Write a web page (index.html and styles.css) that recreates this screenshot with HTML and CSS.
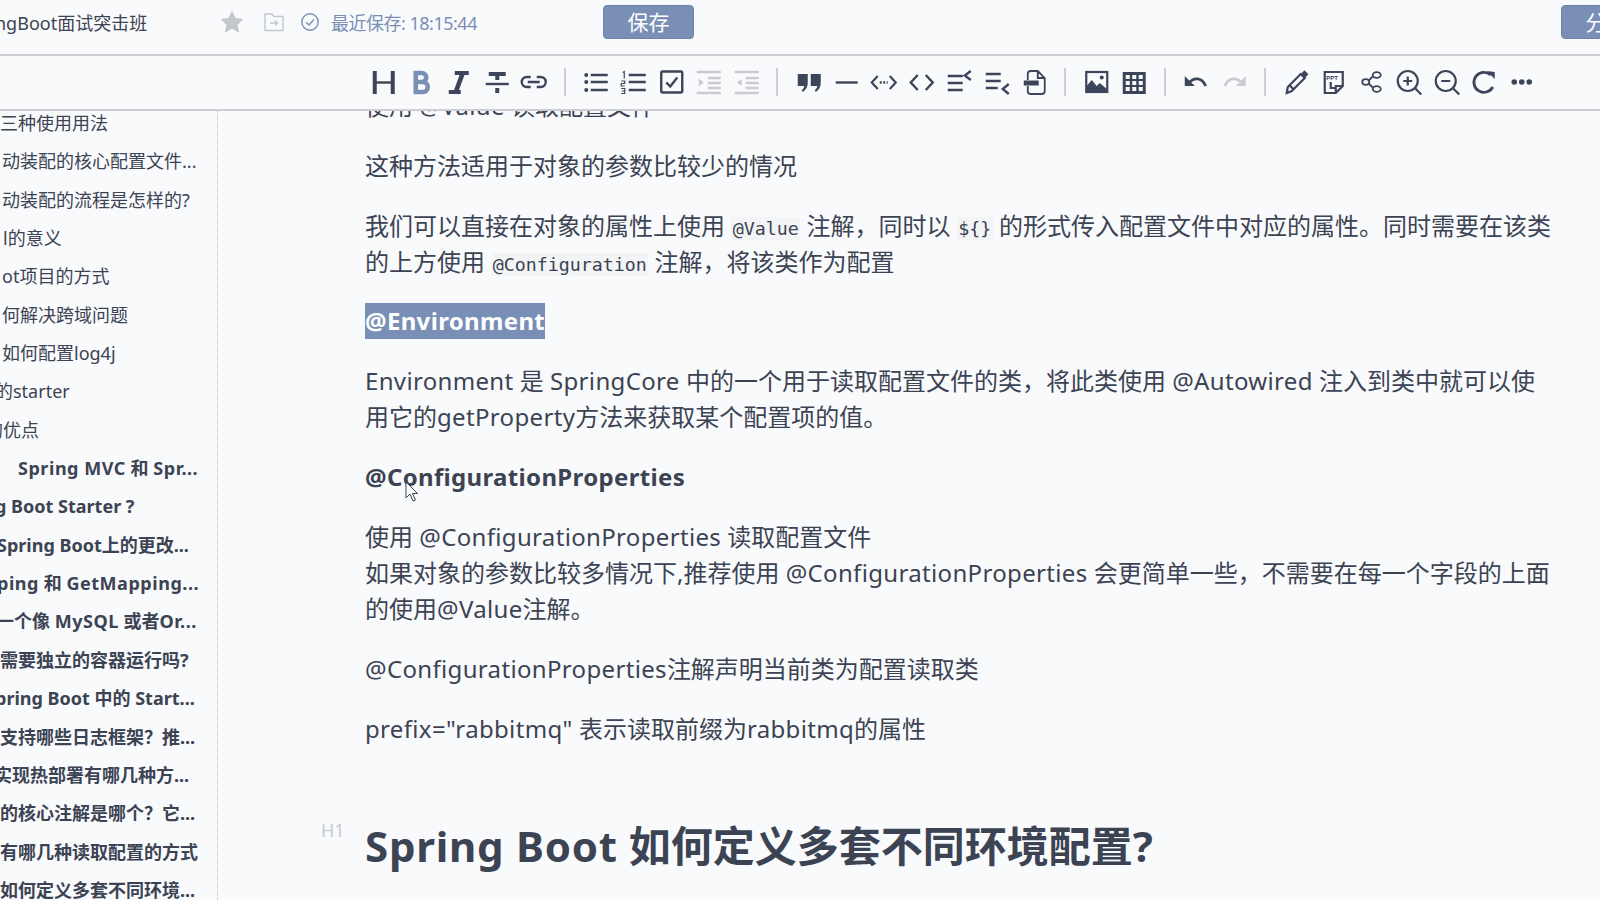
FILE: index.html
```html
<!DOCTYPE html>
<html lang="zh-CN">
<head>
<meta charset="utf-8">
<title>SpringBoot面试突击班</title>
<link rel="stylesheet" href="styles.css">
</head>
<body>
<header class="topbar">
  <div class="doc-title">ngBoot面试突击班</div>
  <svg class="top-icon star" width="24" height="24" viewBox="0 0 24 24"><path d="M12 2l3 6.600 7 .9-5.100 4.900 1.300 7.100L12 18l-6.200 3.500 1.300-7.100L2 9.500l7-.9z"/></svg>
  <svg class="top-icon file" width="22" height="22" viewBox="0 0 22 22"><path d="M2 3h7l2 2.500h9v14H2zM7 12h7M12 9.500l2.500 2.500-2.500 2.500"/></svg>
  <svg class="top-icon saved" width="20" height="20" viewBox="0 0 20 20"><circle cx="10" cy="10" r="8.200"/><path d="M6.200 10.200l2.800 2.800 5-5.500"/></svg>
  <div class="save-time">最近保存: 18:15:44</div>
  <button class="btn save">保存</button>
  <button class="btn share">分享</button>
</header>

<nav class="toolbar">
  <svg class="ico" viewBox="0 0 28 28"><path class="thick" d="M5 3v23M23 3v23"/><path d="M5 14.500h18"/></svg>
  <svg class="ico active" viewBox="0 0 28 28"><path class="thick2" d="M8 5h6a4 4 0 0 1 0 9H8zM8 14h7a5 5 0 0 1 0 10H8z"/></svg>
  <svg class="ico" viewBox="0 0 28 28"><path class="thick" d="M10 5h14M4 24h12"/><path class="thick2" d="M18 5l-7 19"/></svg>
  <svg class="ico" viewBox="0 0 28 28"><path class="thick" d="M6 6h17M14.500 6v6M14.500 20v5"/><path d="M3 16h23"/></svg>
  <svg class="ico" viewBox="0 0 28 28"><path d="M11 9H7a5 5 0 0 0 0 10h4M17 9h4a5 5 0 0 1 0 10h-4M8 14h12"/></svg>
  <i class="sep"></i>
  <svg class="ico" viewBox="0 0 28 28"><path d="M8 7h17M8 14h17M8 22h17"/><circle class="dot" cx="3.500" cy="7" r="2"/><circle class="dot" cx="3.500" cy="14" r="2"/><circle class="dot" cx="3.500" cy="22" r="2"/></svg>
  <svg class="ico" viewBox="0 0 28 28"><path d="M9 7h17M9 14h17M9 22h17"/><path class="thin" d="M3 4.500l1.500-1v7M1.500 13h3.500v2.500h-3.500v2.500h3.500M1.500 20.500h3.500v5h-3.500M2 23h3"/></svg>
  <svg class="ico" viewBox="0 0 28 28"><rect x="3.500" y="3.500" width="21" height="21" rx="1.500"/><path d="M8.500 14.500l4 4 7-9"/></svg>
  <svg class="ico off" viewBox="0 0 28 28"><path d="M2 4h24M13 10h13M13 15h13M13 20h13M2 25h24"/><path class="solid" d="M4 10.500l5 4-5 4z"/></svg>
  <svg class="ico off" viewBox="0 0 28 28"><path d="M2 4h24M13 10h13M13 15h13M13 20h13M2 25h24"/><path class="solid" d="M9 11l-5 3.500 5 3.500z"/></svg>
  <i class="sep"></i>
  <svg class="ico" viewBox="0 0 28 28"><path class="solid" d="M3 6h10v9c0 4-2 7-5 9l-1-2c1.500-1 2.500-2.500 2.500-4H3zM16 6h10v9c0 4-2 7-5 9l-1-2c1.500-1 2.500-2.500 2.500-4H16z"/></svg>
  <svg class="ico" viewBox="0 0 28 28"><path d="M3 14.500h22"/></svg>
  <svg class="ico" viewBox="0 0 28 28"><path class="slim" d="M8 8l-6 6.500 6 6.500M20 8l6 6.500-6 6.500"/><path class="dots" d="M10 14.500h8"/></svg>
  <svg class="ico" viewBox="0 0 28 28"><path d="M10 7l-7 7.500 7 7.500M18 7l7 7.500-7 7.500"/></svg>
  <svg class="ico" viewBox="0 0 28 28"><path d="M3 8h15M3 15h15M3 22h15M26 3l-6 4.500 6 4.500"/></svg>
  <svg class="ico" viewBox="0 0 28 28"><path d="M3 6h15M3 13h15M3 20h12M26 16l-6 5 6 5"/></svg>
  <svg class="ico" viewBox="0 0 28 28"><path class="thin2" d="M8 12V6a3 3 0 0 1 3-3h7l7 7v13a3 3 0 0 1-3 3H11a3 3 0 0 1-3-3v-5M18 3v7h7"/><rect class="solid" x="4" y="12.500" width="15" height="5"/></svg>
  <i class="sep"></i>
  <svg class="ico" viewBox="0 0 28 28"><rect class="slim" x="3.500" y="4" width="21" height="20"/><circle class="dot" cx="19" cy="9.500" r="2"/><path class="solid" d="M3 24v-5l6-7 5 6 3-3 7 6v3z"/></svg>
  <svg class="ico" viewBox="0 0 28 28"><path class="solid" fill-rule="evenodd" d="M3 4h23v22H3zM6 7v4h4V7zM12.500 7v4h4V7zM19 7v4h4V7zM6 13v4h4v-4zM12.500 13v4h4v-4zM19 13v4h4v-4zM6 19v4h4v-4zM12.500 19v4h4v-4zM19 19v4h4v-4z"/></svg>
  <i class="sep"></i>
  <svg class="ico" viewBox="0 0 28 28"><path class="solid" d="M2 8v10h10z"/><path class="thick3" d="M6 15c5-6 13-6 17 3"/></svg>
  <svg class="ico off" viewBox="0 0 28 28"><path class="solid" d="M26 8v10H16z"/><path class="thick3" d="M22 15c-5-6-13-6-17 3"/></svg>
  <i class="sep"></i>
  <svg class="ico" viewBox="0 0 28 28"><path class="slim" d="M5 19L18 6l4 4L9 23l-5 2zM7.500 18l3.500 3.500"/><path class="thick2" d="M20 4l4 4"/></svg>
  <svg class="ico" viewBox="0 0 28 28"><path class="slim" d="M5 4h18v14l-7 7H5zM23 18h-7v7M11 14v6h4"/><text class="ppt" x="6.500" y="12">PPT</text></svg>
  <svg class="ico" viewBox="0 0 28 28"><g class="thin2"><ellipse cx="19" cy="7" rx="4" ry="2.800"/><ellipse cx="19" cy="21" rx="4" ry="2.800"/><ellipse cx="8" cy="14" rx="3.500" ry="2.800"/><path d="M11 12.500L15.500 8M11 15.500l4.500 4.500"/></g></svg>
  <svg class="ico" viewBox="0 0 28 28"><circle class="slim" cx="13" cy="13" r="10"/><path class="slim" d="M20.500 20.500l6 6M8.500 13h9M13 8.500v9"/></svg>
  <svg class="ico" viewBox="0 0 28 28"><circle class="slim" cx="13" cy="13" r="10"/><path class="slim" d="M20.500 20.500l6 6M8.500 13h9"/></svg>
  <svg class="ico" viewBox="0 0 28 28"><path class="thick3" d="M21 7A10 10 0 1 0 23 19"/><path class="solid" d="M17 3l8 1v7z"/></svg>
  <svg class="ico" viewBox="0 0 28 28"><circle class="dot" cx="6.500" cy="14" r="2.800"/><circle class="dot" cx="14" cy="14" r="2.800"/><circle class="dot" cx="21.500" cy="14" r="2.800"/></svg>
</nav>

<div class="workspace">
  <aside class="outline">
    <ul>
      <li>三种使用用法</li>
      <li class="in2">动装配的核心配置文件...</li>
      <li class="in2">动装配的流程是怎样的?</li>
      <li class="in3">l的意义</li>
      <li class="in2">ot项目的方式</li>
      <li class="in2">何解决跨域问题</li>
      <li class="in2">如何配置log4j</li>
      <li class="cut5">的starter</li>
      <li class="cut15">的优点</li>
      <li class="strong in18"><span class="lat">Spring MVC</span> 和 <span class="lat">Spr...</span></li>
      <li class="strong cut5">g Boot Starter ?</li>
      <li class="strong cut3">Spring Boot上的更改...</li>
      <li class="strong cut3"><span class="lat">ping</span> 和 <span class="lat">GetMapping...</span></li>
      <li class="strong cut4">一个像 <span class="lat">MySQL</span> 或者<span class="lat">Or...</span></li>
      <li class="strong">需要独立的容器运行吗?</li>
      <li class="strong cut5">pring Boot 中的 Start...</li>
      <li class="strong">支持哪些日志框架？推...</li>
      <li class="strong cut6">实现热部署有哪几种方...</li>
      <li class="strong">的核心注解是哪个？它...</li>
      <li class="strong">有哪几种读取配置的方式</li>
      <li class="strong">如何定义多套不同环境...</li>
    </ul>
  </aside>
  <main class="editor">
    <article class="doc">
      <p>使用 <span class="lat">@Value</span> 读取配置文件</p>
      <p>这种方法适用于对象的参数比较少的情况</p>
      <p class="tight">我们可以直接在对象的属性上使用 <code>@Value</code> 注解，同时以 <code>${}</code> 的形式传入配置文件中对应的属性。同时需要在该类的上方使用 <code>@Configuration</code> 注解，将该类作为配置</p>
      <h3><span class="picked">@Environment</span></h3>
      <p><span class="lat">Environment</span> 是 <span class="lat">SpringCore</span> 中的一个用于读取配置文件的类，将此类使用 <span class="lat">@Autowired</span> 注入到类中就可以使用它的<span class="lat">getProperty</span>方法来获取某个配置项的值。</p>
      <h3>@ConfigurationProperties</h3>
      <p>使用 <span class="lat">@ConfigurationProperties</span> 读取配置文件<br>如果对象的参数比较多情况下,推荐使用 <span class="lat">@ConfigurationProperties</span> 会更简单一些，不需要在每一个字段的上面的使用<span class="lat">@Value</span>注解。</p>
      <p><span class="lat">@ConfigurationProperties</span>注解声明当前类为配置读取类</p>
      <p><span class="lat">prefix="rabbitmq"</span> 表示读取前缀为<span class="lat">rabbitmq</span>的属性</p>
      <h1><span class="h-mark">H1</span><span class="lat">Spring Boot</span> 如何定义多套不同环境配置?</h1>
    </article>
    <svg class="cursor" width="14" height="22" viewBox="0 0 14 22"><path d="M1 1v16l4-4 3 7 2.500-1-3-6.500h5z"/></svg>
  </main>
</div>
</body>
</html>
```

FILE: styles.css
```css
* {
  box-sizing: border-box;
}

html, body {
  margin: 0;
  height: 100%;
}

body {
  display: flex;
  flex-direction: column;
  width: 1600px;
  height: 900px;
  overflow: hidden;
  background: #f9fafc;
  color: #3c4353;
  font-family: "Noto Sans", "Noto Sans CJK SC", sans-serif;
}

/* top bar */
.topbar {
  display: flex;
  align-items: center;
  flex: 0 0 56px;
  height: 56px;
  padding-bottom: 10px;
  border-bottom: 2px solid #cdced3;
  overflow: hidden;
  font-size: 18px;
}

.doc-title {
  width: 220px;
  margin-left: -5px;
  margin-right: 5px;
  white-space: nowrap;
}

.top-icon {
  flex: none;
  fill: none;
  stroke: #c3c6cc;
  stroke-width: 1.4;
}

.star {
  fill: #c3c6cc;
}

.file {
  margin-left: 19px;
}

.saved {
  margin-left: 15px;
  stroke: #7a8fb6;
}

.save-time {
  margin-left: 11px;
  width: 272px;
  color: #7a8fb6;
  white-space: nowrap;
  letter-spacing: -.5px;
}

.btn {
  flex: none;
  width: 91px;
  height: 34px;
  padding: 0;
  border: 1px solid #6f83a9;
  border-radius: 4px;
  background: #7a8fb6;
  color: #fff;
  font: inherit;
  font-size: 21px;
  line-height: 30px;
}

.share {
  margin-left: auto;
  margin-right: -52px;
}

/* toolbar */
.toolbar {
  display: flex;
  align-items: center;
  flex: 0 0 55px;
  padding-left: 365px;
  padding-bottom: 1px;
  border-bottom: 2px solid #cdced3;
}

.ico {
  flex: none;
  width: 37.5px;
  height: 28px;
  fill: none;
  stroke: #3c4559;
  stroke-width: 2.4;
}

.ico .thick {
  stroke-width: 4;
}

.ico .thick2 {
  stroke-width: 4.6;
}

.ico .thick3 {
  stroke-width: 2.8;
}

.ico .slim {
  stroke-width: 2.2;
}

.ico .thin {
  stroke-width: 1.2;
}

.ico .thin2 {
  stroke-width: 1.8;
}

.ico .dots {
  stroke-dasharray: 2 1.500;
}

.ico .solid,
.ico .dot {
  fill: #3c4559;
  stroke: none;
}

.ico .ppt {
  fill: #3c4559;
  stroke: none;
  font-size: 6px;
  font-weight: 700;
  font-family: "Liberation Sans", sans-serif;
}

.ico.active {
  stroke: #7a8fb6;
}

.ico.off {
  stroke: #c9cbd0;
}

.ico.off .solid {
  fill: #c9cbd0;
}

.sep {
  flex: none;
  width: 2px;
  height: 28px;
  margin: 0 12px 0 11px;
  background: #cdced3;
}

/* main area */
.workspace {
  display: flex;
  flex: 1;
  min-height: 0;
}

.outline {
  flex: 0 0 218px;
  overflow: hidden;
  border-right: 1px dotted #b9bcc2;
}

.outline ul {
  margin: -7px 0 0;
  padding: 0;
  list-style: none;
}

.outline li {
  height: 38.35px;
  line-height: 38.35px;
  font-size: 18px;
  white-space: nowrap;
}

.outline .strong {
  font-weight: 700;
}

.outline .strong .lat {
  letter-spacing: .03em;
}

.outline .in2 { padding-left: 2px; }
.outline .in3 { padding-left: 3px; }
.outline .in18 { padding-left: 18px; }
.outline .cut3 { margin-left: -3px; }
.outline .cut4 { margin-left: -4px; }
.outline .cut5 { margin-left: -5px; }
.outline .cut6 { margin-left: -6px; }
.outline .cut15 { margin-left: -15px; }

.editor {
  position: relative;
  flex: 1;
  overflow: hidden;
  padding-left: 147px;
}

.doc {
  width: 1190px;
  margin-top: -23px;
  font-size: 24px;
  line-height: 36px;
}

.doc p {
  margin: 0 0 24px;
}

.doc p.tight {
  margin-bottom: 23px;
}

.lat {
  letter-spacing: .014em;
}

.doc h3 {
  margin: 0 0 24px;
  font-size: 24px;
  line-height: 36px;
  font-weight: 700;
  letter-spacing: .014em;
}

.doc code {
  padding: 1px 1.5px;
  background: #f3f4f5;
  font-family: "DejaVu Sans Mono", monospace;
  font-size: 18.3px;
  line-height: 1;
}

.picked {
  display: inline-block;
  background: #7a8fb6;
  color: #fff;
}

.doc h1 {
  position: relative;
  margin: 69px 0 0;
  font-size: 42px;
  line-height: 60px;
  font-weight: 700;
}

.doc h1 .lat {
  letter-spacing: .018em;
}

.h-mark {
  position: absolute;
  left: -44px;
  top: -4px;
  color: #c9cbd0;
  font-size: 18px;
  font-weight: 400;
  line-height: 36px;
}

.cursor {
  position: absolute;
  left: 187px;
  top: 370px;
  fill: #fff;
  stroke: #3c4353;
  stroke-width: 1;
}
```
